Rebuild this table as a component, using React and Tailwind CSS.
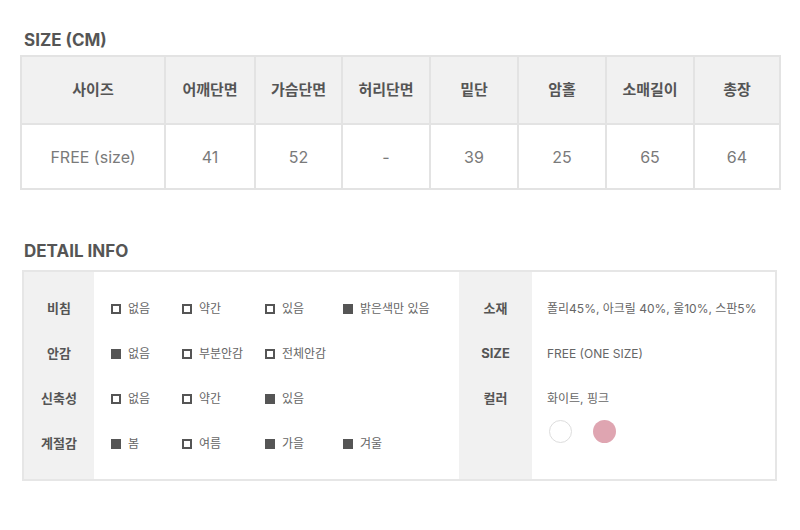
import React from "react";

const font = { fontFamily: 'Inter, "Noto Sans CJK KR", sans-serif' };

function Box({ on }) {
  return on ? (
    <span className="inline-block w-[10px] h-[10px] bg-[#555] mr-[7px] shrink-0" />
  ) : (
    <span className="inline-block w-[10px] h-[10px] border-2 border-[#555] mr-[7px] shrink-0" />
  );
}

const leftRows = [
  ["비침", [["없음", 0], ["약간", 0], ["있음", 0], ["밝은색만 있음", 1]]],
  ["안감", [["없음", 1], ["부분안감", 0], ["전체안감", 0]]],
  ["신축성", [["없음", 0], ["약간", 0], ["있음", 1]]],
  ["계절감", [["봄", 1], ["여름", 0], ["가을", 1], ["겨울", 1]]],
];

export default function App() {
  const heads = ["사이즈", "어깨단면", "가슴단면", "허리단면", "밑단", "암홀", "소매길이", "총장"];
  const vals = ["FREE (size)", "41", "52", "-", "39", "25", "65", "64"];
  const widths = ["w-[142px]", "w-[90px]", "w-[87px]", "w-[88px]", "w-[88px]", "w-[88px]", "w-[88px]", "w-[86px]"];
  return (
    <div className="w-[800px] h-[530px] bg-white" style={font}>
      <div className="pt-[29px] pl-[24px] text-[17px] font-bold text-[#555] leading-[22px]">SIZE (CM)</div>
      <div className="ml-[20px] mt-[4px] w-[761px] border-2 border-[#e3e3e3] flex flex-col">
        <div className="flex bg-[#f1f1f1] h-[66px]">
          {heads.map((h, i) => (
            <div
              key={i}
              className={`${widths[i]} flex items-center justify-center text-[15px] font-bold text-[#555] ${i > 0 ? "border-l-2 border-[#e3e3e3]" : ""}`}
            >
              {h}
            </div>
          ))}
        </div>
        <div className="flex h-[65px] border-t-2 border-[#e3e3e3]">
          {vals.map((v, i) => (
            <div
              key={i}
              className={`${widths[i]} flex items-center justify-center text-[16px] text-[#7a7a7a] ${i > 0 ? "border-l-2 border-[#e3e3e3]" : ""}`}
            >
              {v}
            </div>
          ))}
        </div>
      </div>

      <div className="pt-[50px] pl-[24px] text-[17px] font-bold text-[#555] leading-[22px]">DETAIL INFO</div>
      <div className="ml-[22px] mt-[8px] w-[755px] h-[211px] border-2 border-[#e6e6e6] flex">
        <div className="w-[70px] bg-[#f1f1f1] pt-[14px] flex flex-col">
          {leftRows.map(([l]) => (
            <div key={l} className="h-[45px] flex items-center justify-center text-[13px] font-bold text-[#555]">
              {l}
            </div>
          ))}
        </div>
        <div className="w-[365px] pt-[14px] pl-[17px] flex flex-col">
          {leftRows.map(([l, items]) => (
            <div key={l} className="h-[45px] grid grid-cols-[71px_83px_78px_auto] items-center">
              {items.map(([t, on], j) => (
                <div key={j} className="flex items-center text-[12px] text-[#666]">
                  <Box on={on} />
                  {t}
                </div>
              ))}
            </div>
          ))}
        </div>
        <div className="w-[73px] bg-[#f1f1f1] pt-[14px] flex flex-col">
          {["소재", "SIZE", "컬러"].map((l) => (
            <div key={l} className="h-[45px] flex items-center justify-center text-[13px] font-bold text-[#555]">
              {l}
            </div>
          ))}
        </div>
        <div className="flex-1 pt-[14px] pl-[15px] flex flex-col text-[12px] text-[#666]">
          <div className="h-[45px] flex items-center">폴리45%, 아크릴 40%, 울10%, 스판5%</div>
          <div className="h-[45px] flex items-center">FREE (ONE SIZE)</div>
          <div className="h-[45px] flex items-center">화이트, 핑크</div>
          <div className="flex gap-[21px] -mt-[1px] pl-[2px]">
            <span className="w-[23px] h-[23px] rounded-full border border-[#ddd] bg-white" />
            <span className="w-[23px] h-[23px] rounded-full bg-[#dfa5b1]" />
          </div>
        </div>
      </div>
    </div>
  );
}
